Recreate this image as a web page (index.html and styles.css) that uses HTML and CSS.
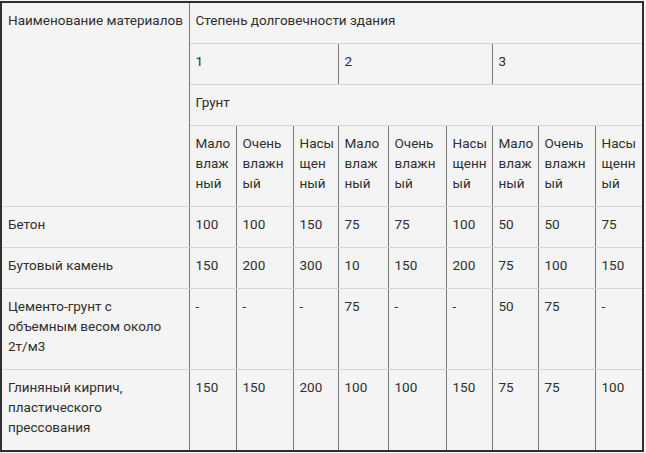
FILE: index.html
```html
<!DOCTYPE html>
<html lang="ru">
<head>
<meta charset="utf-8">
<link rel="stylesheet" href="styles.css">
</head>
<body>
<table class="durability">
  <colgroup>
    <col class="c-name">
    <col class="c47"><col class="c57"><col class="c45">
    <col class="c50"><col class="c58"><col class="c46">
    <col class="c46"><col class="c57"><col class="c48">
  </colgroup>
  <tr>
    <td rowspan="4">Наименование материалов</td>
    <td colspan="9">Степень долговечности здания</td>
  </tr>
  <tr>
    <td colspan="3">1</td>
    <td colspan="3">2</td>
    <td colspan="3">3</td>
  </tr>
  <tr>
    <td colspan="9">Грунт</td>
  </tr>
  <tr class="sub">
    <td>Мало<br>влаж<br>ный</td><td>Очень<br>влажн<br>ый</td><td>Насы<br>щен<br>ный</td>
    <td>Мало<br>влаж<br>ный</td><td>Очень<br>влажн<br>ый</td><td>Насы<br>щенн<br>ый</td>
    <td>Мало<br>влаж<br>ный</td><td>Очень<br>влажн<br>ый</td><td>Насы<br>щенн<br>ый</td>
  </tr>
  <tr>
    <td class="name">Бетон</td>
    <td>100</td><td>100</td><td>150</td><td>75</td><td>75</td><td>100</td><td>50</td><td>50</td><td>75</td>
  </tr>
  <tr>
    <td class="name">Бутовый камень</td>
    <td>150</td><td>200</td><td>300</td><td>10</td><td>150</td><td>200</td><td>75</td><td>100</td><td>150</td>
  </tr>
  <tr>
    <td class="name">Цементо-грунт с объемным весом около 2т/м3</td>
    <td>-</td><td>-</td><td>-</td><td>75</td><td>-</td><td>-</td><td>50</td><td>75</td><td>-</td>
  </tr>
  <tr>
    <td class="name">Глиняный кирпич, пластического прессования</td>
    <td>150</td><td>150</td><td>200</td><td>100</td><td>100</td><td>150</td><td>75</td><td>75</td><td>100</td>
  </tr>
</table>
</body>
</html>
```

FILE: styles.css
```css
html, body {
  margin: 0;
  padding: 0;
  background: #f4f4f4;
}
body {
  padding-top: 1px;
}
.durability {
  border-collapse: collapse;
  table-layout: fixed;
  width: 644px;
  background: #f4f4f4;
  font-family: Roboto, "Noto Sans", sans-serif;
  font-size: 13.5px;
  line-height: 20px;
  color: #2f2f2f;
  border-top: 2px solid #2e2e2e;
  border-left: 2px solid #2e2e2e;
  border-right: 2px solid #2e2e2e;
  border-bottom: 2px solid #2e2e2e;
}
.c-name { width: 188px; }
.c45 { width: 45px; }
.c46 { width: 46px; }
.c47 { width: 47px; }
.c48 { width: 48px; }
.c50 { width: 50px; }
.c57 { width: 57px; }
.c58 { width: 58px; }
.durability td {
  vertical-align: top;
  text-align: left;
  padding: 7px 2px 13px 6px;
  border-left: 1px solid #7c7c7c;
  border-right: 1px solid #7c7c7c;
  border-top: 1px solid #d6d6d6;
  border-bottom: 1px solid #d6d6d6;
}
.durability td.name {
  padding-right: 20px;
}
.durability tr.sub td {
  white-space: nowrap;
}
```
